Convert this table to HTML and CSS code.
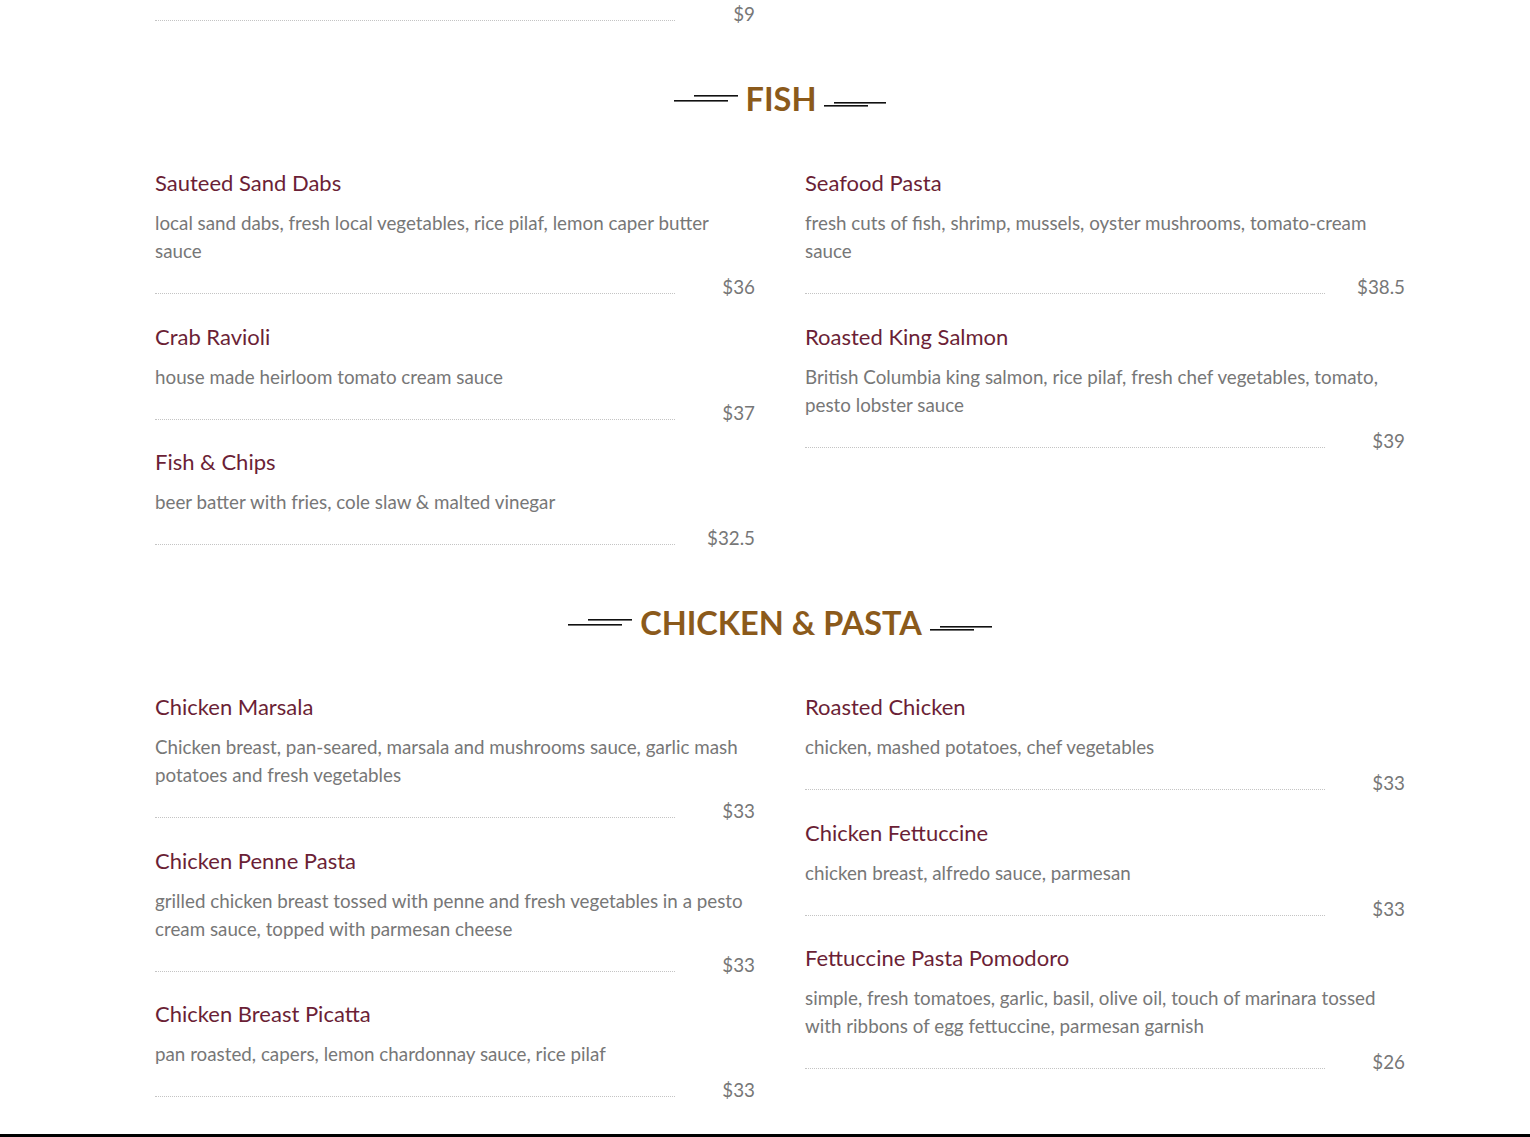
FILE: index.html
```html
<!DOCTYPE html>
<html lang="en">
<head>
<meta charset="utf-8">
<title>Menu</title>
<link rel="stylesheet" href="styles.css">
</head>
<body>
<main class="menu">
  <div class="grid">
    <div class="col">
      <div class="price-row"><span class="dots"></span><span class="price">$9</span></div>
    </div>
    <div class="col"></div>
  </div>

  <section class="section">
    <h2 class="heading">
      <svg class="orn orn-left" width="64" height="12" viewBox="0 0 64 12"><rect x="20" y="2" width="44" height="1.6" fill="#111"/><rect x="0" y="7" width="54" height="1.6" fill="#111"/></svg>
      <span>FISH</span>
      <svg class="orn orn-right" width="62" height="12" viewBox="0 0 62 12"><rect x="10" y="6" width="52" height="1.6" fill="#111"/><rect x="0" y="9" width="44" height="1.6" fill="#111"/></svg>
    </h2>
    <div class="grid">
      <div class="col">
        <article class="item">
          <h3 class="title">Sauteed Sand Dabs</h3>
          <p class="desc">local sand dabs, fresh local vegetables, rice pilaf, lemon caper butter sauce</p>
          <div class="price-row"><span class="dots"></span><span class="price">$36</span></div>
        </article>
        <article class="item">
          <h3 class="title">Crab Ravioli</h3>
          <p class="desc">house made heirloom tomato cream sauce</p>
          <div class="price-row"><span class="dots"></span><span class="price">$37</span></div>
        </article>
        <article class="item">
          <h3 class="title">Fish &amp; Chips</h3>
          <p class="desc">beer batter with fries, cole slaw &amp; malted vinegar</p>
          <div class="price-row"><span class="dots"></span><span class="price">$32.5</span></div>
        </article>
      </div>
      <div class="col">
        <article class="item">
          <h3 class="title">Seafood Pasta</h3>
          <p class="desc">fresh cuts of fish, shrimp, mussels, oyster mushrooms, tomato-cream sauce</p>
          <div class="price-row"><span class="dots"></span><span class="price">$38.5</span></div>
        </article>
        <article class="item">
          <h3 class="title">Roasted King Salmon</h3>
          <p class="desc">British Columbia king salmon, rice pilaf, fresh chef vegetables, tomato, pesto lobster sauce</p>
          <div class="price-row"><span class="dots"></span><span class="price">$39</span></div>
        </article>
      </div>
    </div>
  </section>

  <section class="section">
    <h2 class="heading">
      <svg class="orn orn-left" width="64" height="12" viewBox="0 0 64 12"><rect x="20" y="2" width="44" height="1.6" fill="#111"/><rect x="0" y="7" width="54" height="1.6" fill="#111"/></svg>
      <span>CHICKEN &amp; PASTA</span>
      <svg class="orn orn-right" width="62" height="12" viewBox="0 0 62 12"><rect x="10" y="6" width="52" height="1.6" fill="#111"/><rect x="0" y="9" width="44" height="1.6" fill="#111"/></svg>
    </h2>
    <div class="grid">
      <div class="col">
        <article class="item">
          <h3 class="title">Chicken Marsala</h3>
          <p class="desc">Chicken breast, pan-seared, marsala and mushrooms sauce, garlic mash potatoes and fresh vegetables</p>
          <div class="price-row"><span class="dots"></span><span class="price">$33</span></div>
        </article>
        <article class="item">
          <h3 class="title">Chicken Penne Pasta</h3>
          <p class="desc">grilled chicken breast tossed with penne and fresh vegetables in a pesto cream sauce, topped with parmesan cheese</p>
          <div class="price-row"><span class="dots"></span><span class="price">$33</span></div>
        </article>
        <article class="item">
          <h3 class="title">Chicken Breast Picatta</h3>
          <p class="desc">pan roasted, capers, lemon chardonnay sauce, rice pilaf</p>
          <div class="price-row"><span class="dots"></span><span class="price">$33</span></div>
        </article>
      </div>
      <div class="col">
        <article class="item">
          <h3 class="title">Roasted Chicken</h3>
          <p class="desc">chicken, mashed potatoes, chef vegetables</p>
          <div class="price-row"><span class="dots"></span><span class="price">$33</span></div>
        </article>
        <article class="item">
          <h3 class="title">Chicken Fettuccine</h3>
          <p class="desc">chicken breast, alfredo sauce, parmesan</p>
          <div class="price-row"><span class="dots"></span><span class="price">$33</span></div>
        </article>
        <article class="item">
          <h3 class="title">Fettuccine Pasta Pomodoro</h3>
          <p class="desc">simple, fresh tomatoes, garlic, basil, olive oil, touch of marinara tossed with ribbons of egg fettuccine, parmesan garnish</p>
          <div class="price-row"><span class="dots"></span><span class="price">$26</span></div>
        </article>
      </div>
    </div>
  </section>
</main>
<footer class="footer"></footer>
</body>
</html>
```

FILE: styles.css
```css
html, body {
  margin: 0;
  padding: 0;
  background: #fff;
}

body {
  font-family: Lato, "Liberation Sans", sans-serif;
  color: #777;
}

.menu {
  width: 1250px;
  margin: 0 0 0 155px;
  padding-bottom: 8px;
}

.grid {
  display: flex;
  gap: 50px;
}

.col {
  flex: 0 0 600px;
  display: flex;
  flex-direction: column;
}

.section {
  margin: 0;
}

.heading {
  margin: 50px 0;
  height: 42px;
  display: flex;
  justify-content: center;
  align-items: center;
  gap: 8px;
  font-size: 32.5px;
  line-height: 42px;
  font-weight: 700;
  color: #8b5a1b;
  letter-spacing: 0;
}

.orn {
  display: block;
  flex: 0 0 auto;
}

.orn-left {
  margin-top: 0;
}

.orn-right {
  margin-top: 6px;
}

.item {
  margin-bottom: 22.5px;
}

.item:last-child {
  margin-bottom: 0;
}

.title {
  margin: 0 0 13px;
  font-size: 22px;
  line-height: 26px;
  font-weight: 400;
  color: #6b1f36;
}

.desc {
  margin: 0 0 8px;
  font-size: 18.8px;
  line-height: 28px;
  color: #777;
}

.price-row {
  display: flex;
  height: 28px;
}

.dots {
  flex: 0 0 520px;
  height: 20px;
  border-bottom: 1px dotted #c4c4c4;
}

.price {
  flex: 1;
  text-align: right;
  font-size: 18.8px;
  line-height: 28px;
  color: #777;
}

.footer {
  height: 4px;
  margin-top: 22px;
  background: #000;
}
```
